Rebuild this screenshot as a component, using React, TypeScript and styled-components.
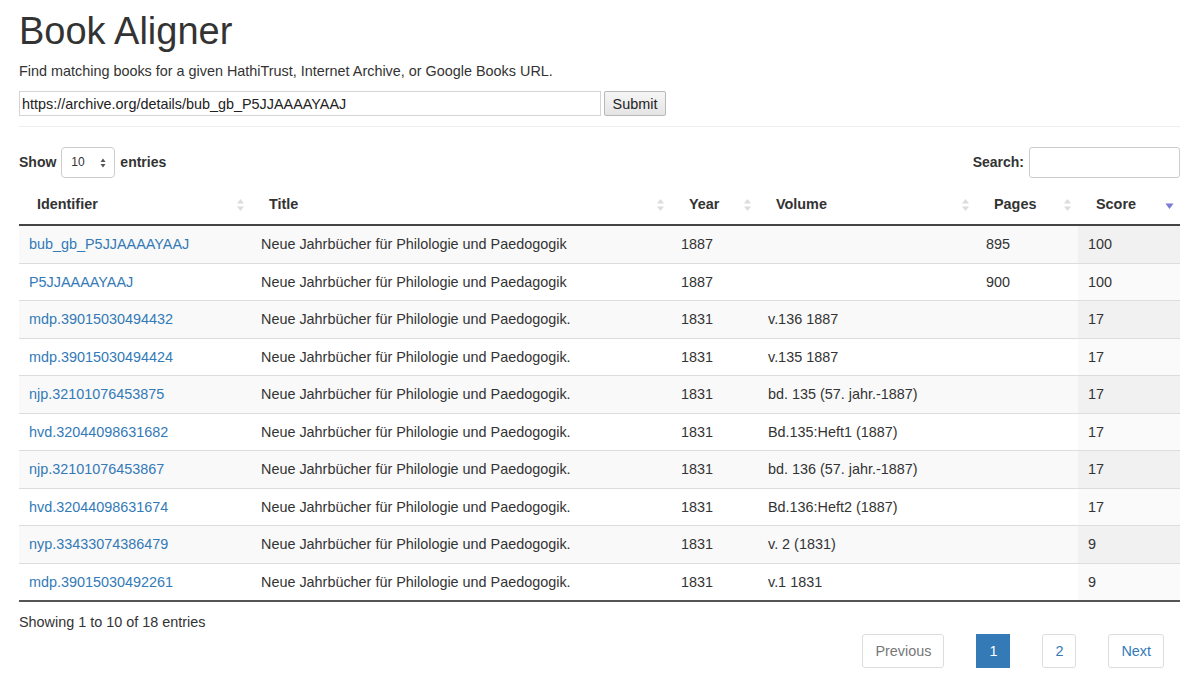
import React, { FC } from 'react';
import styled, { createGlobalStyle } from 'styled-components';

const GlobalStyle = createGlobalStyle`
  body {
    margin: 0;
    background: #fff;
    color: #333;
    font-family: "Liberation Sans", Arial, Helvetica, sans-serif;
    font-size: 14px;
    line-height: 1.42857;
  }
`;

const Page = styled.div`
  padding: 0 20px 0 19px;
`;
const Heading = styled.h1`
  font-size: 38px;
  font-weight: normal;
  line-height: 42px;
  margin: 10px 0 0;
`;
const Lead = styled.p`
  font-size: 14.4px;
  line-height: 20px;
  margin: 9px 0 10px;
`;
const UrlForm = styled.form`
  display: flex;
  align-items: center;
  gap: 3px;
`;
const UrlInput = styled.input`
  box-sizing: border-box;
  width: 582px;
  height: 25px;
  border: 1px solid #d4d4d4;
  padding: 0 2px;
  font: 14.4px "Liberation Sans", Arial, sans-serif;
  color: #222;
`;
const SubmitButton = styled.button`
  box-sizing: border-box;
  width: 62px;
  height: 25px;
  border: 1px solid #b8b8b8;
  border-radius: 2px;
  background: linear-gradient(#f6f6f6, #e4e4e4);
  font: 14.4px "Liberation Sans", Arial, sans-serif;
  color: #222;
  padding: 0;
`;
const Rule = styled.hr`
  border: 0;
  border-top: 1px solid #eee;
  margin: 10px 0 20px;
`;
const Controls = styled.div`
  display: flex;
  justify-content: space-between;
  align-items: center;
  font-weight: bold;
`;
const ControlLabel = styled.label`
  display: flex;
  align-items: center;
  gap: 5px;
`;
const FakeSelect = styled.div`
  box-sizing: border-box;
  width: 54px;
  height: 31px;
  border: 1px solid #ccc;
  border-radius: 4px;
  display: flex;
  align-items: center;
  justify-content: space-between;
  padding: 0 8px 0 9px;
  font-size: 12px;
  font-weight: normal;
`;
const SearchInput = styled.input`
  box-sizing: border-box;
  width: 151px;
  height: 31px;
  border: 1px solid #ccc;
  border-radius: 3px;
`;
const Table = styled.table`
  width: 100%;
  margin-top: 7px;
  border-collapse: collapse;
  table-layout: fixed;
  border-bottom: 2px solid #555;
`;
const HeadCell = styled.th<{ $w: number }>`
  box-sizing: border-box;
  width: ${(p) => p.$w}px;
  position: relative;
  text-align: left;
  font-size: 14.4px;
  padding: 9px 18px 10px;
  line-height: 20px;
  border-bottom: 2px solid #444;
`;
const SortIcon = styled.span`
  position: absolute;
  right: 6px;
  top: 13px;
  display: flex;
`;
const Row = styled.tr<{ $odd: boolean }>`
  background: ${(p) => (p.$odd ? '#f9f9f9' : '#fff')};
`;
const Cell = styled.td<{ $sorted?: boolean; $odd?: boolean }>`
  padding: 8px 10px;
  height: 20.5px;
  line-height: 20px;
  font-size: 14.4px;
  border-top: 1px solid #ddd;
  white-space: nowrap;
  overflow: hidden;
  background: ${(p) => (p.$sorted ? (p.$odd ? '#f1f1f1' : '#fafafa') : 'transparent')};
`;
const Link = styled.a`
  color: #337ab7;
  text-decoration: none;
`;
const Footer = styled.div`
  margin-top: 10px;
`;
const Info = styled.div`
  font-size: 14.4px;
  line-height: 20px;
`;
const Pager = styled.div`
  display: flex;
  justify-content: flex-end;
  gap: 32px;
  margin: 2px 16px 0 0;
`;
const PageButton = styled.a<{ $active?: boolean; $disabled?: boolean }>`
  box-sizing: border-box;
  height: 34px;
  padding: 0 12px;
  display: flex;
  align-items: center;
  font-size: 14.4px;
  border: 1px solid ${(p) => (p.$active ? '#337ab7' : '#ddd')};
  border-radius: ${(p) => (p.$active ? '0' : '3px')};
  background: ${(p) => (p.$active ? '#337ab7' : '#fff')};
  color: ${(p) => (p.$active ? '#fff' : p.$disabled ? '#777' : '#337ab7')};
`;

const Both: FC = () => (
  <svg width="9" height="14" viewBox="0 0 9 14">
    <path d="M4.5 1 L8 5.5 H1 Z" fill="#dcdcdc" />
    <path d="M4.5 13 L8 8.5 H1 Z" fill="#dcdcdc" />
  </svg>
);
const Desc: FC = () => (
  <svg width="9" height="14" viewBox="0 0 9 14">
    <path d="M4.5 11 L8.5 5.5 H0.5 Z" fill="#7a7ad8" />
  </svg>
);

const columns: [string, number][] = [
  ['Identifier', 232],
  ['Title', 420],
  ['Year', 87],
  ['Volume', 218],
  ['Pages', 102],
  ['Score', 102],
];

type Book = { id: string; title: string; year: string; volume: string; pages: string; score: string };
const books: Book[] = [
  { id: 'bub_gb_P5JJAAAAYAAJ', title: 'Neue Jahrbücher für Philologie und Paedogogik', year: '1887', volume: '', pages: '895', score: '100' },
  { id: 'P5JJAAAAYAAJ', title: 'Neue Jahrbücher für Philologie und Paedagogik', year: '1887', volume: '', pages: '900', score: '100' },
  { id: 'mdp.39015030494432', title: 'Neue Jahrbücher für Philologie und Paedogogik.', year: '1831', volume: 'v.136 1887', pages: '', score: '17' },
  { id: 'mdp.39015030494424', title: 'Neue Jahrbücher für Philologie und Paedogogik.', year: '1831', volume: 'v.135 1887', pages: '', score: '17' },
  { id: 'njp.32101076453875', title: 'Neue Jahrbücher für Philologie und Paedogogik.', year: '1831', volume: 'bd. 135 (57. jahr.-1887)', pages: '', score: '17' },
  { id: 'hvd.32044098631682', title: 'Neue Jahrbücher für Philologie und Paedogogik.', year: '1831', volume: 'Bd.135:Heft1 (1887)', pages: '', score: '17' },
  { id: 'njp.32101076453867', title: 'Neue Jahrbücher für Philologie und Paedogogik.', year: '1831', volume: 'bd. 136 (57. jahr.-1887)', pages: '', score: '17' },
  { id: 'hvd.32044098631674', title: 'Neue Jahrbücher für Philologie und Paedogogik.', year: '1831', volume: 'Bd.136:Heft2 (1887)', pages: '', score: '17' },
  { id: 'nyp.33433074386479', title: 'Neue Jahrbücher für Philologie und Paedogogik.', year: '1831', volume: 'v. 2 (1831)', pages: '', score: '9' },
  { id: 'mdp.39015030492261', title: 'Neue Jahrbücher für Philologie und Paedogogik.', year: '1831', volume: 'v.1 1831', pages: '', score: '9' },
];

const App: FC = () => (
  <Page>
    <GlobalStyle />
    <Heading>Book Aligner</Heading>
    <Lead>Find matching books for a given HathiTrust, Internet Archive, or Google Books URL.</Lead>
    <UrlForm onSubmit={(e) => e.preventDefault()}>
      <UrlInput defaultValue="https://archive.org/details/bub_gb_P5JJAAAAYAAJ" />
      <SubmitButton type="submit">Submit</SubmitButton>
    </UrlForm>
    <Rule />
    <Controls>
      <ControlLabel>
        Show
        <FakeSelect>
          10
          <svg width="6" height="10" viewBox="0 0 6 10">
            <path d="M3 0.5 L5.5 4 H0.5 Z" fill="#555" />
            <path d="M3 9.5 L5.5 6 H0.5 Z" fill="#555" />
          </svg>
        </FakeSelect>
        entries
      </ControlLabel>
      <ControlLabel>
        Search:
        <SearchInput />
      </ControlLabel>
    </Controls>
    <Table>
      <thead>
        <tr>
          {columns.map(([name, w]) => (
            <HeadCell key={name} $w={w}>
              {name}
              <SortIcon>{name === 'Score' ? <Desc /> : <Both />}</SortIcon>
            </HeadCell>
          ))}
        </tr>
      </thead>
      <tbody>
        {books.map((b, i) => (
          <Row key={b.id} $odd={i % 2 === 0}>
            <Cell>
              <Link href="#">{b.id}</Link>
            </Cell>
            <Cell>{b.title}</Cell>
            <Cell>{b.year}</Cell>
            <Cell>{b.volume}</Cell>
            <Cell>{b.pages}</Cell>
            <Cell $sorted $odd={i % 2 === 0}>
              {b.score}
            </Cell>
          </Row>
        ))}
      </tbody>
    </Table>
    <Footer>
      <Info>Showing 1 to 10 of 18 entries</Info>
      <Pager>
        <PageButton $disabled>Previous</PageButton>
        <PageButton $active>1</PageButton>
        <PageButton>2</PageButton>
        <PageButton>Next</PageButton>
      </Pager>
    </Footer>
  </Page>
);

export default App;
